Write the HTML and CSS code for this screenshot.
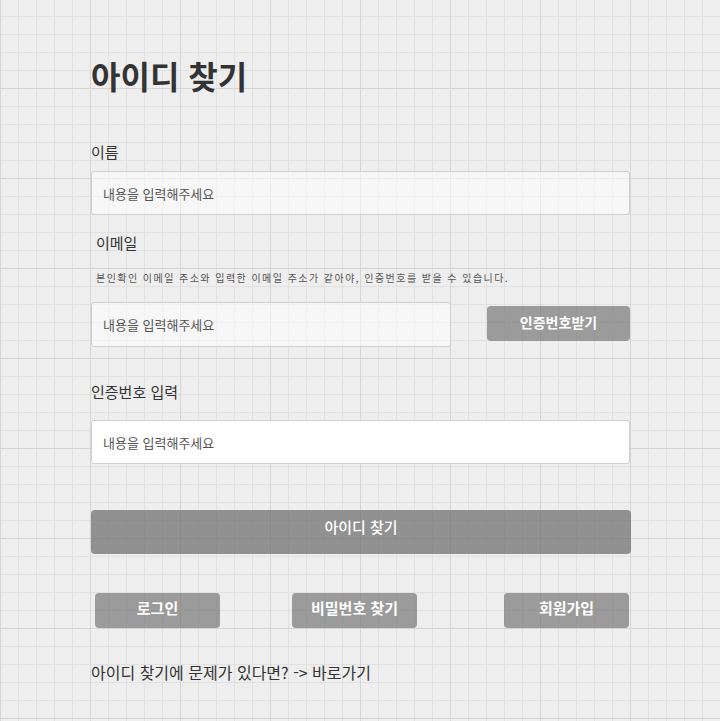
FILE: index.html
```html
<!DOCTYPE html>
<html lang="ko">
<head>
<meta charset="utf-8">
<title>아이디 찾기</title>
<link rel="stylesheet" href="styles.css">
</head>
<body>
<main class="page">
  <h1 class="title">아이디 찾기</h1>

  <label class="label label-name" for="name">이름</label>
  <input class="field field-soft field-name" id="name" type="text" placeholder="내용을 입력해주세요">

  <label class="label label-email" for="email">이메일</label>
  <p class="hint">본인확인 이메일 주소와 입력한 이메일 주소가 같아야, 인증번호를 받을 수 있습니다.</p>
  <div class="email-row">
    <input class="field field-soft field-email" id="email" type="text" placeholder="내용을 입력해주세요">
    <button class="btn btn-code" type="button">인증번호받기</button>
  </div>

  <label class="label label-code" for="code">인증번호 입력</label>
  <input class="field field-solid field-code" id="code" type="text" placeholder="내용을 입력해주세요">

  <button class="btn btn-main" type="button">아이디 찾기</button>

  <div class="links">
    <button class="btn btn-link btn-login" type="button">로그인</button>
    <button class="btn btn-link btn-pw" type="button">비밀번호 찾기</button>
    <button class="btn btn-link btn-join" type="button">회원가입</button>
  </div>

  <p class="footer">아이디 찾기에 문제가 있다면? -&gt; 바로가기</p>
</main>
</body>
</html>
```

FILE: styles.css
```css
html, body {
  margin: 0;
  padding: 0;
}

body {
  min-height: 721px;
  font-family: "Noto Sans CJK KR", "Noto Sans", sans-serif;
  color: #333333;
  background-color: #eeeeee;
  background-image:
    linear-gradient(#d5d5d5 1px, transparent 1px),
    linear-gradient(90deg, #d5d5d5 1px, transparent 1px),
    linear-gradient(#e1e1e1 1px, transparent 1px),
    linear-gradient(90deg, #e1e1e1 1px, transparent 1px);
  background-size: 90px 90px, 90px 90px, 18px 18px, 18px 18px;
  background-position: 0 -2px, 0 0, 0 -2px, 0 0;
}

.page {
  width: 539px;
  padding: 57px 0 0 91px;
  display: flex;
  flex-direction: column;
}

.title {
  margin: 0;
  font-size: 32px;
  line-height: 36px;
  font-weight: 700;
  color: #333333;
}

.label {
  display: block;
  font-size: 15px;
  line-height: 18px;
  color: #333333;
}

.label-name { margin-top: 50px; }
.label-email { margin-top: 19px; padding-left: 5px; }
.label-code { margin-top: 36px; }

.hint {
  margin: 19px 0 0 5px;
  font-size: 10px;
  line-height: 14px;
  letter-spacing: 1.45px;
  color: #555555;
}

.field {
  box-sizing: border-box;
  height: 44px;
  padding: 0 11px;
  border: 1px solid #cfcfcf;
  border-radius: 3px;
  font-family: inherit;
  font-size: 13px;
  color: #333333;
  outline: none;
}

.field::placeholder {
  color: #555555;
}

.field-soft { background: rgba(255, 255, 255, 0.55); }
.field-solid { background: #ffffff; }

.field-name { margin-top: 10px; width: 539px; }
.field-code { margin-top: 19px; width: 539px; }

.email-row {
  margin-top: 17px;
  display: flex;
  align-items: center;
  height: 45px;
}

.field-email {
  width: 360px;
  height: 45px;
}

.btn {
  box-sizing: border-box;
  border: none;
  border-radius: 4px;
  font-family: inherit;
  color: #ffffff;
  font-weight: 700;
  font-size: 14px;
  cursor: pointer;
  padding: 0;
}

.btn-code {
  margin-left: auto;
  margin-top: -2px;
  width: 143px;
  height: 35px;
  padding-bottom: 3px;
  background: rgba(120, 120, 120, 0.7);
}

.btn-main {
  margin-top: 46px;
  width: 540px;
  height: 44px;
  padding-bottom: 12px;
  background: rgba(110, 110, 110, 0.72);
  font-size: 15px;
  font-weight: 500;
}

.links {
  margin-top: 39px;
  display: flex;
  height: 35px;
}

.btn-link {
  width: 125px;
  height: 35px;
  padding-bottom: 7px;
  font-size: 15px;
  background: rgba(115, 115, 115, 0.68);
}

.btn-login { margin-left: 4px; }
.btn-pw { margin-left: 72px; }
.btn-join { margin-left: auto; margin-right: 1px; }

.footer {
  margin: 35px 0 0;
  font-size: 16px;
  line-height: 18px;
  color: #333333;
}
```
